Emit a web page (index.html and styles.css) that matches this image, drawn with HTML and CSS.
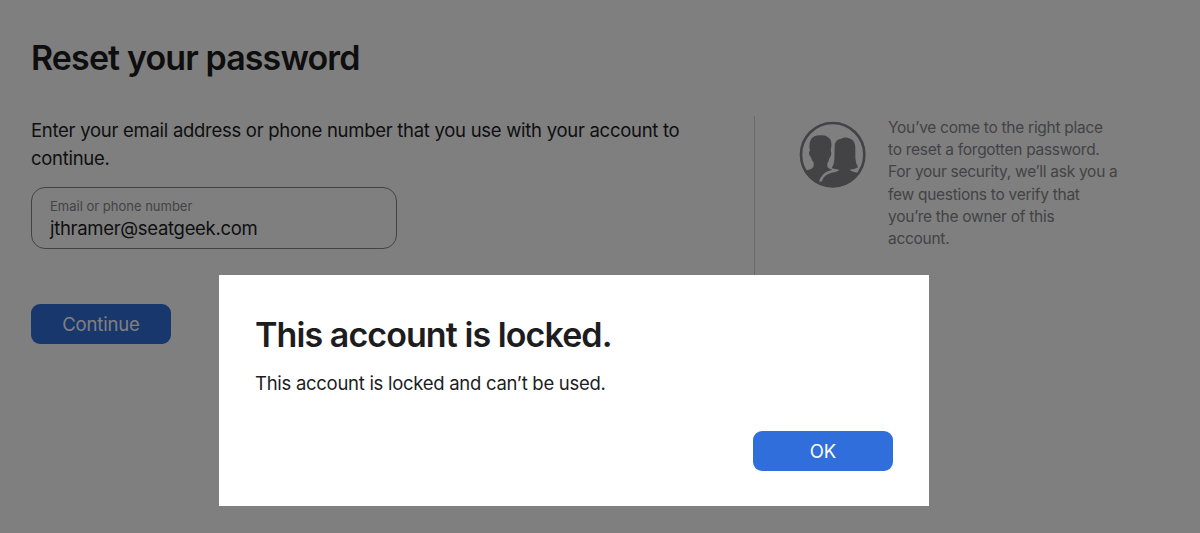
FILE: index.html
```html
<!DOCTYPE html>
<html lang="en">
<head>
    <meta charset="utf-8">
    <title>Reset your password</title>
    <link rel="stylesheet" href="styles.css">
</head>
<body>
    <main class="page">
        <h1 class="page-title">Reset your password</h1>
        <div class="content">
            <form class="reset-form">
                <p class="intro">Enter your email address or phone number that you use with your account to continue.</p>
                <div class="field">
                    <span class="field-label">Email or phone number</span>
                    <span class="field-value">jthramer@seatgeek.com</span>
                </div>
                <button type="button" class="button">Continue</button>
            </form>
            <aside class="sidebar">
                <svg class="people-icon" viewBox="30 31 198 198" aria-hidden="true">
                    <defs>
                        <clipPath id="badge"><circle cx="128" cy="129" r="98"/></clipPath>
                    </defs>
                    <circle cx="128" cy="129" r="95" fill="none" stroke="#86868b" stroke-width="8"/>
                    <g clip-path="url(#badge)" fill="#86868b">
                        <path d="M28 182 Q50 177 61 173 Q71 169 71 161 L71 153 Q65 148 63 137 Q57 134 57 121 L60 117 Q56 100 61 87 Q67 71 91 71 Q106 69 116 78 Q126 84 124 105 L122 117 Q126 124 122 134 L118 140 Q117 150 112 155 L112 163 Q113 171 127 174 Q103 179 92 198 Q87 203 89 211 L96 209 Q100 190 124 183 Q146 180 147 174 L125 170 Q133 156 133 144 L134 101 Q137 82 154 81 Q164 74 181 81 Q194 85 196 105 L196 139 Q197 155 204 167 Q193 174 179 174 Q180 180 228 188 L228 232 L28 232 Z"/>
                    </g>
                </svg>
                <p class="help">You’ve come to the right place to reset a forgotten password. For your security, we’ll ask you a few questions to verify that you’re the owner of this account.</p>
            </aside>
        </div>
    </main>

    <div class="overlay">
        <div class="modal" role="dialog" aria-labelledby="modal-title">
            <h2 class="modal-title" id="modal-title">This account is locked.</h2>
            <p class="modal-text">This account is locked and can’t be used.</p>
            <div class="modal-actions">
                <button type="button" class="button">OK</button>
            </div>
        </div>
    </div>
</body>
</html>
```

FILE: styles.css
```css
* {
    box-sizing: border-box;
}
body {
    margin: 0;
    height: 533px;
    overflow: hidden;
    background: #fff;
    color: #1d1d1f;
    font-family: Inter, "Liberation Sans", sans-serif;
}
h1, h2, p {
    margin: 0;
}
.page {
    padding: 36px 31px 0;
}
.page-title {
    font-size: 34px;
    line-height: 44px;
    font-weight: 600;
    letter-spacing: -0.88px;
}
.content {
    display: flex;
    margin-top: 36px;
}
.reset-form {
    width: 723px;
}
.intro {
    width: 670px;
    font-size: 18.5px;
    line-height: 28px;
    letter-spacing: -0.28px;
}
.field {
    display: flex;
    flex-direction: column;
    width: 366px;
    height: 62px;
    margin-top: 15px;
    padding: 9px 18px;
    border: 1px solid #86868b;
    border-radius: 14px;
}
.field-label {
    font-size: 13px;
    line-height: 19px;
    color: #86868b;
}
.field-value {
    font-size: 18.5px;
    line-height: 24px;
    letter-spacing: -0.31px;
}
.button {
    display: block;
    width: 140px;
    height: 40px;
    padding: 0;
    border: 0;
    border-radius: 9px;
    background: #2f6edb;
    color: #fff;
    font-family: inherit;
    font-size: 18.5px;
    line-height: 40px;
    letter-spacing: -0.15px;
}
.reset-form .button {
    margin-top: 55px;
}
.sidebar {
    display: flex;
    align-items: flex-start;
    height: 340px;
    padding-left: 45px;
    border-left: 1px solid #d2d2d7;
}
.people-icon {
    width: 66px;
    height: 66px;
    margin-top: 6px;
    overflow: visible;
}
.help {
    width: 230.5px;
    margin: 1px 0 0 22px;
    font-size: 15.5px;
    line-height: 22.2px;
    letter-spacing: -0.28px;
    color: #86868b;
}
.overlay {
    position: fixed;
    inset: 0;
    background: rgba(0, 0, 0, 0.5);
}
.modal {
    width: 709.5px;
    height: 231px;
    margin: 275px 0 0 219.4px;
    padding: 36px 36px 0 35.6px;
    background: #fff;
}
.modal-title {
    font-size: 34px;
    line-height: 48px;
    font-weight: 600;
    letter-spacing: -0.92px;
}
.modal-text {
    margin-top: 11px;
    font-size: 18.5px;
    line-height: 26px;
    letter-spacing: -0.28px;
}
.modal-actions {
    display: flex;
    justify-content: flex-end;
    margin-top: 35px;
}
```
